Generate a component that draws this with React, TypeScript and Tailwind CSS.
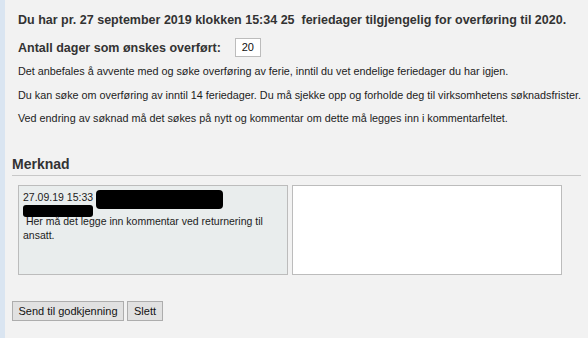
const font = { fontFamily: '"Liberation Sans", Arial, sans-serif' };

const notes = [
  { text: 'Det anbefales å avvente med og søke overføring av ferie, inntil du vet endelige feriedager du har igjen.', mt: 'mt-[7px]' },
  { text: 'Du kan søke om overføring av inntil 14 feriedager. Du må sjekke opp og forholde deg til virksomhetens søknadsfrister.', mt: 'mt-[10px]' },
  { text: 'Ved endring av søknad må det søkes på nytt og kommentar om dette må legges inn i kommentarfeltet.', mt: 'mt-[9px]' },
];

export default function App() {
  return (
    <div className="flex min-h-[338px] w-[588px] overflow-hidden bg-[#f2f2f2]" style={font}>
      {/* venstre kant */}
      <div className="w-[5px] shrink-0 bg-[#dae5f1]" />

      <div className="flex-1 pl-[7px] pr-[12px]">
        {/* info */}
        <div className="pl-[6px]">
          <h1 className="mt-[12px] h-[16px] whitespace-pre text-[12.5px] font-bold leading-[16px] text-[#333]">
            Du har pr. 27 september 2019 klokken 15:34 25{'\u00a0 '}feriedager tilgjengelig for overføring til 2020.
          </h1>
          <div className="mt-[10px] flex h-[19px] items-center">
            <span className="text-[12.5px] font-bold leading-[16px] text-[#333]">Antall dager som ønskes overført:</span>
            <div className="ml-[14px] flex h-[19px] w-[26px] items-center justify-center border border-[#bcbcbc] bg-white text-[11px] text-[#111]">
              20
            </div>
          </div>
          {notes.map((n) => (
            <p key={n.text} className={`${n.mt} whitespace-nowrap text-[10.8px] leading-[14px] text-[#1c1c1c]`}>
              {n.text}
            </p>
          ))}
        </div>

        {/* merknad */}
        <h2 className="mt-[31px] border-b border-[#c8c8c8] pb-[2px] text-[14px] font-bold leading-[17px] text-[#333]">
          Merknad
        </h2>
        <div className="mt-[9px] flex gap-[4px] pl-[6px]">
          <div className="h-[90px] w-[270px] border border-[#bcbcbc] bg-[#e9eded] px-[4px] pt-[4px] text-[10.5px] leading-[14px] text-[#1c1c1c]">
            <div className="flex items-start">
              <span>27.09.19 15:33</span>
              <span className="ml-[3px] h-[19px] w-[127px] rounded-[4px] bg-black" />
            </div>
            <div className="-mt-[4px] h-[12px] w-[70px] rounded-[3px] bg-black" />
            <p className="-mt-[3px]">{'\u00a0'}Her må det legge inn kommentar ved returnering til ansatt.</p>
          </div>
          <div className="h-[90px] w-[270px] border border-[#bcbcbc] bg-white" />
        </div>

        {/* knapper */}
        <div className="mt-[26px] flex gap-[3px]">
          <button className="h-[20px] w-[112px] border border-[#adadad] bg-[#e1e1e1] text-[11px] text-[#111]">
            Send til godkjenning
          </button>
          <button className="h-[20px] w-[36px] border border-[#adadad] bg-[#e1e1e1] text-[11px] text-[#111]">
            Slett
          </button>
        </div>
      </div>
    </div>
  );
}
